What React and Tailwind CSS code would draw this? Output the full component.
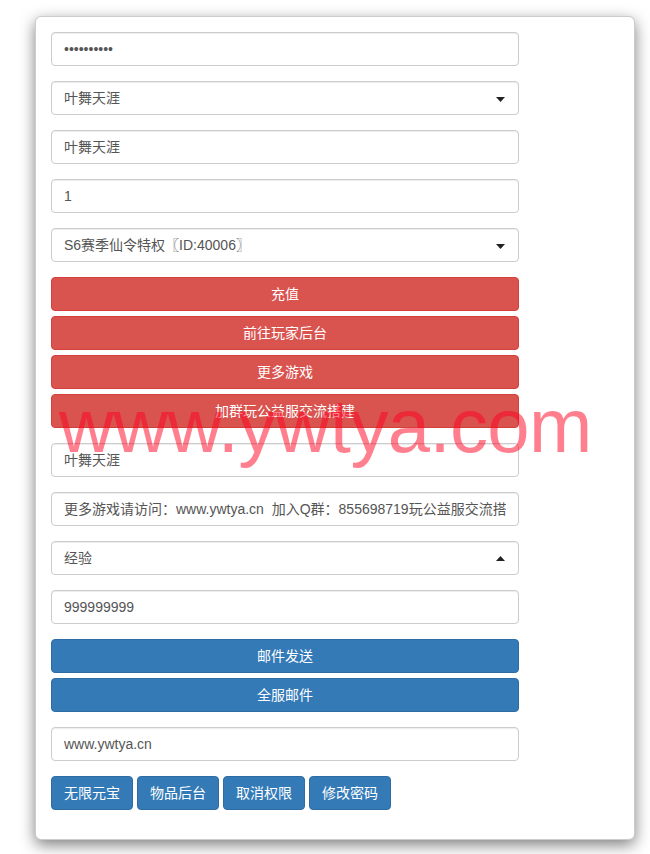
import React from 'react';

const font = { fontFamily: '"Liberation Sans", "Noto Sans CJK SC", sans-serif' };

const Field = ({ children, caret }) => (
  <div className="relative flex items-center h-[34px] px-[12px] border border-[#ccc] rounded-[4px] bg-white shadow-[inset_0_1px_1px_rgba(0,0,0,0.075)] text-[14px] text-[#555] overflow-hidden whitespace-pre">
    <span className="flex-1 overflow-hidden">{children}</span>
    {caret === 'down' && (
      <svg width="9" height="5" viewBox="0 0 9 5" className="absolute right-[13px] top-[15px]">
        <path d="M0 0 H9 L4.5 5 Z" fill="#222" />
      </svg>
    )}
    {caret === 'up' && (
      <svg width="9" height="5" viewBox="0 0 9 5" className="absolute right-[13px] top-[14px]">
        <path d="M0 5 H9 L4.5 0 Z" fill="#222" />
      </svg>
    )}
  </div>
);

const Btn = ({ children, color }) => (
  <div
    className={
      'flex items-center justify-center h-[34px] rounded-[4px] border text-[14px] text-white ' +
      (color === 'red' ? 'bg-[#d9534f] border-[#d43f3a]' : 'bg-[#337ab7] border-[#2e6da4]')
    }
  >
    {children}
  </div>
);

export default function App() {
  return (
    <div className="relative min-h-[854px] bg-white pt-[16px]" style={font}>
      <div className="ml-[35px] w-[600px] bg-white border border-black/20 rounded-[6px] shadow-[0_5px_15px_rgba(0,0,0,0.5)] px-[15px] pt-[15px] pb-[29px]">
        <div className="w-[468px] flex flex-col gap-[15px]">
          <Field>••••••••••</Field>
          <Field caret="down">叶舞天涯</Field>
          <Field>叶舞天涯</Field>
          <Field>1</Field>
          <Field caret="down">S6赛季仙令特权〖ID:40006〗</Field>

          <div className="flex flex-col gap-[5px]">
            <Btn color="red">充值</Btn>
            <Btn color="red">前往玩家后台</Btn>
            <Btn color="red">更多游戏</Btn>
            <Btn color="red">加群玩公益服交流搭建</Btn>
          </div>

          <Field>叶舞天涯</Field>
          <Field>更多游戏请访问：www.ywtya.cn  加入Q群：855698719玩公益服交流搭建</Field>
          <Field caret="up">经验</Field>
          <Field>999999999</Field>

          <div className="flex flex-col gap-[5px]">
            <Btn color="blue">邮件发送</Btn>
            <Btn color="blue">全服邮件</Btn>
          </div>

          <Field>www.ywtya.cn</Field>

          <div className="flex gap-[4px]">
            {['无限元宝', '物品后台', '取消权限', '修改密码'].map((t) => (
              <div
                key={t}
                className="flex items-center justify-center h-[34px] px-[12px] rounded-[4px] border border-[#2e6da4] bg-[#337ab7] text-[14px] text-white"
              >
                {t}
              </div>
            ))}
          </div>
        </div>
      </div>

      {/* watermark */}
      <div className="pointer-events-none absolute left-[59px] top-[388px] text-[76px] leading-none tracking-[-0.6px] text-[rgba(255,0,30,0.5)] whitespace-nowrap">
        www.ywtya.com
      </div>
    </div>
  );
}
